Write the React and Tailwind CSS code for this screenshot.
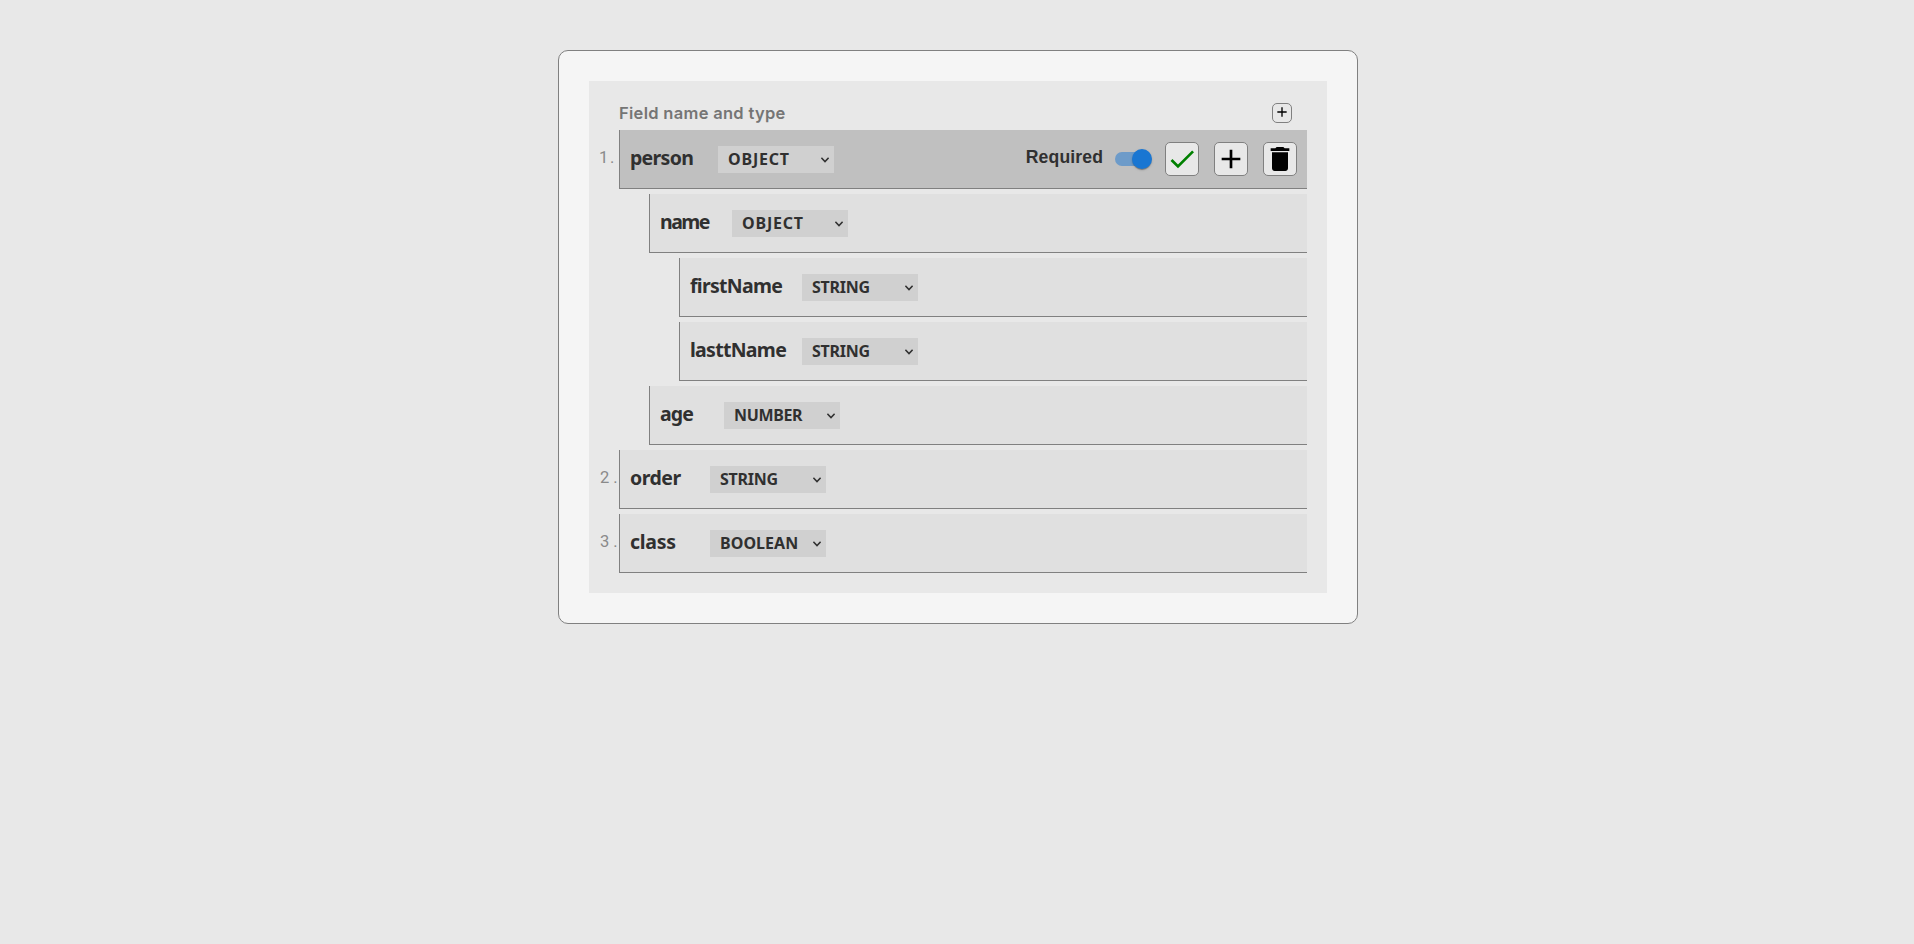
const TYPE_TRACKING = {
  OBJECT: "tracking-[0.8px]",
  STRING: "tracking-[-0.25px]",
  NUMBER: "tracking-[-0.35px]",
  BOOLEAN: "tracking-[0.05px]",
};

const INDENT = { 0: "ml-0", 1: "ml-[30px]", 2: "ml-[60px]" };

const FIELDS = [
  { id: "person", name: "person", type: "OBJECT", depth: 0, index: "1", active: true, width: "w-[88px]", font: "tracking-[-0.7px]", indexFont: "-ml-px tracking-[-1.2px]" },
  { id: "name", name: "name", type: "OBJECT", depth: 1, width: "w-[72px]", font: "tracking-[-1.5px]" },
  { id: "first", name: "firstName", type: "STRING", depth: 2, width: "w-[112px]", font: "tracking-[-0.7px]" },
  { id: "last", name: "lasttName", type: "STRING", depth: 2, width: "w-[112px]", font: "tracking-[-0.7px]" },
  { id: "age", name: "age", type: "NUMBER", depth: 1, width: "w-[64px]", font: "tracking-[-0.9px]" },
  { id: "order", name: "order", type: "STRING", depth: 0, index: "2", width: "w-[80px]", font: "tracking-[-0.5px]", indexFont: "tracking-[0px]" },
  { id: "class", name: "class", type: "BOOLEAN", depth: 0, index: "3", width: "w-[80px]", font: "tracking-[-0.25px]", indexFont: "tracking-[0px]" },
];

function Icon({ d, className }) {
  return (
    <svg viewBox="0 0 24 24" className={className} fill="currentColor" aria-hidden="true">
      <path d={d} />
    </svg>
  );
}

const CHECK = "M9 16.17 4.83 12l-1.42 1.41L9 19 21 7l-1.41-1.41z";
const ADD = "M19 13h-6v6h-2v-6H5v-2h6V5h2v6h6z";
const TRASH = "M6 19c0 1.1.9 2 2 2h8c1.1 0 2-.9 2-2V7H6zM19 4h-3.5l-1-1h-5l-1 1H5v2h14z";

function SquareButton({ label, children }) {
  return (
    <button
      aria-label={label}
      className="flex h-[34px] w-[34px] items-center justify-center rounded-[5px] border border-[#808080] bg-[#e8e8e8]"
    >
      {children}
    </button>
  );
}

function Toggle() {
  return (
    <div role="switch" aria-checked="true" className="flex h-5 w-[37px] items-center justify-end rounded-full">
      <div className="h-3.5 w-[34px] shrink-0 rounded-full bg-[#1976d2]/50" />
      <div className="-ml-[17px] size-5 shrink-0 rounded-full bg-[#1976d2] shadow-[0px_2px_1px_-1px_rgba(0,0,0,0.2),0px_1px_1px_0px_rgba(0,0,0,0.14),0px_1px_3px_0px_rgba(0,0,0,0.12)]" />
    </div>
  );
}

function TypeSelect({ value }) {
  return (
    <div className="flex h-[27px] w-[116px] items-center justify-between bg-[#d0d0d0] pr-[5px] pl-[10px] text-[#303030]">
      <span className={"font-['Noto_Sans',sans-serif] text-base leading-[27px] font-bold " + TYPE_TRACKING[value]}>
        {value}
      </span>
      <svg viewBox="0 0 8 6" className="mt-[1px] h-1.5 w-2" fill="none" stroke="currentColor" strokeWidth="1.5" aria-hidden="true">
        <path d="M.4 .8 4 4.6 7.6 .8" />
      </svg>
    </div>
  );
}

function FieldRow({ field }) {
  return (
    <div className="flex h-[59px]">
      <div className="w-[30px] shrink-0 pt-[18px] pl-[11px]">
        {field.index && (
          <div className={"font-['Roboto',sans-serif] text-[16.5px] leading-5 font-normal whitespace-pre text-[#8a8a8a] " + field.indexFont}>
            {field.index + " ."}
          </div>
        )}
      </div>
      <div
        className={
          "flex flex-1 items-center border-b border-l border-[#808080] pr-[10px] pl-[10px] " +
          INDENT[field.depth] +
          (field.active ? " bg-[#c0c0c0]" : " bg-[#e0e0e0]")
        }
      >
        <div
          className={
            "pb-[2px] font-['Noto_Sans',sans-serif] text-[19.5px] leading-6 font-bold whitespace-nowrap text-[#303030] " +
            field.width + " " + field.font
          }
        >
          {field.name}
        </div>
        <TypeSelect value={field.type} />
        {field.active && (
          <div className="ml-auto flex items-center">
            <span className="mr-3 pb-1 font-['Liberation_Sans',Arial,sans-serif] text-[17.6px] leading-5 font-bold tracking-[0.12px] text-[#303030]">Required</span>
            <Toggle />
            <div className="ml-[13px] flex gap-[15px]">
              <SquareButton label="Save">
                <Icon d={CHECK} className="size-8 text-[#008000]" />
              </SquareButton>
              <SquareButton label="Add child">
                <Icon d={ADD} className="size-8 text-black" />
              </SquareButton>
              <SquareButton label="Delete">
                <Icon d={TRASH} className="size-8 text-black" />
              </SquareButton>
            </div>
          </div>
        )}
      </div>
    </div>
  );
}

export default function App() {
  return (
    <div className="min-h-screen bg-[#e8e8e8] pt-[50px] pl-0.5">
      <main className="mx-auto w-[800px] rounded-[10px] border border-[#808080] bg-[#f5f5f5] p-[30px]">
        <section className="bg-[#e8e8e8] pr-5 pb-5">
          <header className="flex h-[49px] items-end justify-between pr-[15px] pb-[7px] pl-[30px]">
            <h1 className="font-['Inter',sans-serif] text-[16.5px] leading-5 font-semibold tracking-[0.3px] text-[#757575]">Field name and type</h1>
            <button aria-label="Add field" className="flex size-5 items-center justify-center rounded-[5px] border border-[#808080] bg-[#e8e8e8] pb-0.5">
              <Icon d={ADD} className="size-4 text-black" />
            </button>
          </header>
          <div className="flex flex-col gap-[5px]">
            {FIELDS.map((field) => (
              <FieldRow key={field.id} field={field} />
            ))}
          </div>
        </section>
      </main>
    </div>
  );
}
